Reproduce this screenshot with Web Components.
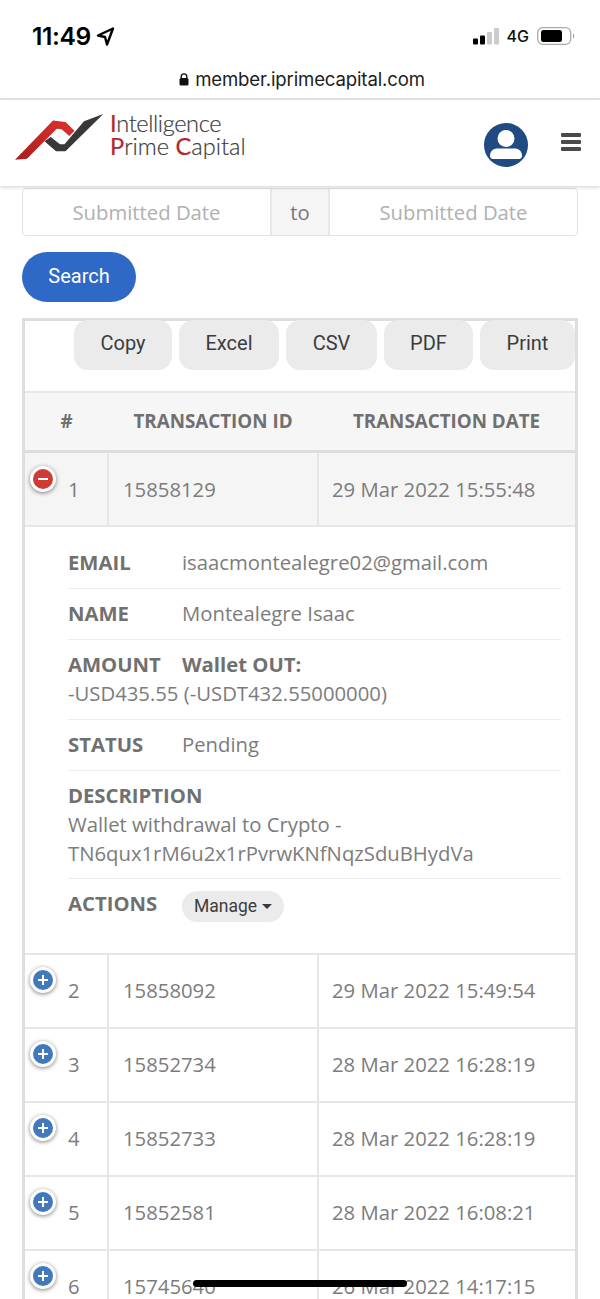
<!DOCTYPE html>
<html>
<head>
<meta charset="utf-8">
<title>Transactions</title>
<style>
  html, body { margin: 0; padding: 0; background: #fff; }
  body { width: 600px; height: 1299px; overflow: hidden; font-family: "Open Sans", sans-serif; color: #6f6f6f; }
</style>
</head>
<body>
<member-page>
  <status-bar slot="chrome" time="11:49"></status-bar>
  <url-bar slot="chrome">member.iprimecapital.com</url-bar>
  <site-header slot="chrome"></site-header>

  <date-filter></date-filter>
  <search-button>Search</search-button>

  <tx-table>
    <export-bar slot="tools"></export-bar>
    <tx-row open index="1" txid="15858129" date="29 Mar 2022 15:55:48"></tx-row>
    <tx-detail>
      <tx-field label="EMAIL">isaacmontealegre02@gmail.com</tx-field>
      <tx-field label="NAME">Montealegre Isaac</tx-field>
      <tx-field label="AMOUNT" head="Wallet OUT:" stacked>-USD435.55 (-USDT432.55000000)</tx-field>
      <tx-field label="STATUS">Pending</tx-field>
      <tx-field label="DESCRIPTION" block>Wallet withdrawal to Crypto -<br>TN6qux1rM6u2x1rPvrwKNfNqzSduBHydVa</tx-field>
      <tx-field label="ACTIONS" last><manage-button>Manage</manage-button></tx-field>
    </tx-detail>
    <tx-row index="2" txid="15858092" date="29 Mar 2022 15:49:54"></tx-row>
    <tx-row index="3" txid="15852734" date="28 Mar 2022 16:28:19"></tx-row>
    <tx-row index="4" txid="15852733" date="28 Mar 2022 16:28:19"></tx-row>
    <tx-row index="5" txid="15852581" date="28 Mar 2022 16:08:21"></tx-row>
    <tx-row index="6" txid="15745640" date="26 Mar 2022 14:17:15"></tx-row>
  </tx-table>
</member-page>

<script>
function defineElement(name, markup, setup) {
  customElements.define(name, class extends HTMLElement {
    constructor() {
      super();
      const template = document.createElement('template');
      template.innerHTML = markup;
      const shadowRoot = this.attachShadow({mode: 'open'});
      shadowRoot.appendChild(template.content.cloneNode(true));
    }
    connectedCallback() {
      if (setup) setup(this, this.shadowRoot);
    }
  });
}

defineElement('member-page', `
  <style>
    :host { display: block; position: relative; width: 600px; height: 1299px; overflow: hidden; }
    .content { padding: 2px 22px 0; }
    .home {
      position: absolute; left: 193px; top: 1280px; width: 214px; height: 7px;
      border-radius: 4px; background: #000;
    }
  </style>
  <slot name="chrome"></slot>
  <div class="content"><slot></slot></div>
  <div class="home"></div>
`);

defineElement('status-bar', `
  <style>
    :host { display: flex; align-items: center; height: 60px; padding: 12px 25px 0 32px; box-sizing: border-box; color: #000; }
    .time { font: 600 24.600px/1 Inter, sans-serif; letter-spacing: -.4px; }
    .arrow { margin-left: 5px; }
    .right { margin-left: auto; display: flex; align-items: center; }
    .net { font: 500 16px/1 Inter, sans-serif; margin: 0 8px 0 7px; color: #111; }
  </style>
  <span class="time"></span>
  <svg class="arrow" width="19" height="19" viewBox="0 0 19 19"><path d="M17 1.500 2 8.500l7 1.500 2 7.500z" fill="none" stroke="#000" stroke-width="2.400" stroke-linejoin="round"/></svg>
  <div class="right">
    <svg width="27" height="17" viewBox="0 0 27 17">
      <rect x="0" y="10.500" width="5" height="6" rx="1" fill="#000"/>
      <rect x="7" y="7.500" width="5" height="9" rx="1" fill="#000"/>
      <rect x="14" y="4" width="5" height="12.500" rx="1" fill="#ccc"/>
      <rect x="21" y="0" width="5" height="16.500" rx="1" fill="#ccc"/>
    </svg>
    <span class="net">4G</span>
    <svg width="38" height="18" viewBox="0 0 38 18">
      <rect x=".7" y=".7" width="33" height="16.600" rx="5" fill="none" stroke="#aaa" stroke-width="1.300"/>
      <rect x="4" y="3" width="21" height="12" rx="2.500" fill="#000"/>
      <path d="M36 6.500c1.500.5 1.500 4.500 0 5z" fill="#999"/>
    </svg>
  </div>
`, (el, root) => {
  root.querySelector('.time').textContent = el.getAttribute('time');
});

defineElement('url-bar', `
  <style>
    :host { display: flex; justify-content: center; align-items: center; gap: 6px; height: 40px; box-sizing: border-box; padding: 0 0 0 4px; color: #1d1d1d; font: 400 18.600px/1 Inter, sans-serif; letter-spacing: -.15px; border-bottom: 2px solid #e8e8e8; }
    svg { flex: none; }
  </style>
  <svg width="10" height="13" viewBox="0 0 10 13"><path d="M2.200 5.500V3.700a2.800 2.800 0 0 1 5.600 0v1.800" fill="none" stroke="#111" stroke-width="1.400"/><rect x=".5" y="5" width="9" height="7.500" rx="1.500" fill="#111"/></svg>
  <slot></slot>
`);

defineElement('site-header', `
  <style>
    :host { display: flex; align-items: center; height: 86px; padding: 0 19px 0 15px; position: relative; z-index: 2; background: #fff; box-shadow: 0 1px 4px rgba(0,0,0,.2); }
    .logo { display: flex; align-items: flex-start; margin-top: -12px; }
    .name { margin: -2px 0 0 6px; font: 300 23.600px/23px Lato, sans-serif; color: #3d3d3d; -webkit-text-stroke: .2px #3d3d3d; }
    .name b { font-weight: 400; color: #b5272a; -webkit-text-stroke: .2px #b5272a; }
    .first { letter-spacing: -.4px; }
    .right { margin-left: auto; display: flex; align-items: center; gap: 33px; }
    .avatar { margin-top: 4px; }
    .menu { display: flex; flex-direction: column; gap: 3px; width: 20px; margin-top: -2px; }
    .menu i { display: block; height: 4px; background: #4a4a4a; border-radius: 1px; }
  </style>
  <div class="logo">
    <svg width="89" height="46" viewBox="0 0 89 46">
      <defs><linearGradient id="red" x1="0" y1="1" x2="1" y2="0"><stop offset="0" stop-color="#a61f1f"/><stop offset="1" stop-color="#e0312c"/></linearGradient></defs>
      <path d="M0 45.700 38 6.500 50.500 8l9 8.700-5.200 5.300-7.600-6.800-5-.5L12 44.700z" fill="url(#red)"/>
      <path d="M29.500 27.300 35.700 23 45 30.300h4.500L69 7.300 88.300 0 50.500 37.200H41z" fill="#383838"/>
    </svg>
    <div class="name"><span class="first"><b>I</b>ntelligence</span><br><b>P</b>rime <b>C</b>apital</div>
  </div>
  <div class="right">
    <svg class="avatar" width="44" height="44" viewBox="0 0 44 44">
      <defs><clipPath id="disc"><circle cx="22" cy="22" r="22"/></clipPath></defs>
      <circle cx="22" cy="22" r="22" fill="#204a82"/>
      <circle cx="22" cy="15.500" r="8.500" fill="#fff"/>
      <path d="M6 33c0-5 3-7.500 8-7.500h16c5 0 8 2.500 8 7.500 0 1.500-1 3-3 3H9c-2 0-3-1.500-3-3z" fill="#fff" clip-path="url(#disc)"/>
    </svg>
    <div class="menu"><i></i><i></i><i></i></div>
  </div>
`);

defineElement('date-filter', `
  <style>
    :host { display: grid; grid-template-columns: 1fr 60px 1fr; height: 48px; box-sizing: border-box; border: 1px solid #e2e2e2; border-radius: 4px; font: 400 20.300px/46px "Open Sans", sans-serif; color: #b0b0b0; text-align: center; }
    .to { background: #f5f5f5; color: #777; border-left: 2px solid #e8e8e8; border-right: 2px solid #e8e8e8; }
  </style>
  <span>Submitted Date</span>
  <span class="to">to</span>
  <span>Submitted Date</span>
`);

defineElement('search-button', `
  <style>
    :host { display: block; width: 114px; height: 50px; margin: 16px 0; border-radius: 25px; background: #2f69c8; color: #fff; font: 400 20px/48px Roboto, sans-serif; text-align: center; }
  </style>
  <slot></slot>
`);

defineElement('tx-table', `
  <style>
    :host { display: block; border: solid #ddd; border-width: 3px 3px 0; }
    .tools { height: 71px; border-bottom: 2px solid #e8e8e8; }
    .head {
      display: grid; grid-template-columns: 83px 210px 1fr; height: 57px;
      background: #f6f6f6; border-bottom: 3px solid #ddd;
      font: 700 18.800px/56px "Open Sans", sans-serif; color: #707070; text-align: center;
    }
  </style>
  <div class="tools"><slot name="tools"></slot></div>
  <div class="head"><span>#</span><span>TRANSACTION ID</span><span>TRANSACTION DATE</span></div>
  <slot></slot>
`);

defineElement('export-bar', `
  <style>
    :host { display: flex; justify-content: flex-end; gap: 7px; margin-top: -1px; }
    span { height: 50px; border-radius: 14px; background: #ebebeb; color: #3c3c3c; font: 400 20px/46px Roboto, sans-serif; text-align: center; }
  </style>
  <span style="width:98px">Copy</span>
  <span style="width:100px">Excel</span>
  <span style="width:91px">CSV</span>
  <span style="width:89px">PDF</span>
  <span style="width:95px">Print</span>
`);

defineElement('tx-row', `
  <style>
    :host { display: grid; grid-template-columns: 83px 210px 1fr; height: 74px; box-sizing: border-box; border-bottom: 2px solid #e6e6e6; font: 400 20.300px/70px "Open Sans", sans-serif; color: #7c7c7c; position: relative; }
    :host([open]) { background: #f5f5f5; line-height: 72px; }
    span + span { border-left: 2px solid #e6e6e6; margin-left: -1px; padding-left: 14px; }
    .date { padding-left: 13px; }
    .num { padding-left: 43px; }
    .toggle {
      position: absolute; left: 5px; top: 12px; width: 26px; height: 26px; box-sizing: border-box;
      border: 3px solid #fff; border-radius: 50%; background: #4279bd;
      box-shadow: 0 1px 4px rgba(0,0,0,.5);
    }
    :host([open]) .toggle { top: 13px; background: #cf3c36; }
    .toggle::before, .toggle::after { content: ""; position: absolute; background: #fff; }
    .toggle::before { left: 5px; right: 5px; top: 9px; height: 2px; }
    .toggle::after { left: 9px; top: 5px; width: 2px; height: 10px; }
    :host([open]) .toggle::after { display: none; }
  </style>
  <div class="toggle"></div>
  <span class="num"></span><span class="id"></span><span class="date"></span>
`, (el, root) => {
  root.querySelector('.num').textContent = el.getAttribute('index');
  root.querySelector('.id').textContent = el.getAttribute('txid');
  root.querySelector('.date').textContent = el.getAttribute('date');
});

defineElement('tx-detail', `
  <style>
    :host { display: block; height: 428px; box-sizing: border-box; padding: 11px 14px 0 43px; border-bottom: 2px solid #e6e6e6; }
  </style>
  <slot></slot>
`);

defineElement('tx-field', `
  <style>
    :host { display: block; border-bottom: 1px solid #ececec; padding: 10px 0 10.900px; font: 400 20.300px/29px "Open Sans", sans-serif; color: #7c7c7c; }
    :host([last]) { border-bottom: 0; }
    b { display: inline-block; min-width: 114px; font-weight: 700; color: #707070; }
    .head { font-weight: 700; color: #707070; }
    :host([block]) b { display: block; }
  </style>
  <b></b><span class="head"></span><span class="br"></span><slot></slot>
`, (el, root) => {
  root.querySelector('b').textContent = el.getAttribute('label');
  if (el.hasAttribute('head')) root.querySelector('.head').textContent = el.getAttribute('head');
  if (el.hasAttribute('stacked')) root.querySelector('.br').style.display = 'block';
});

defineElement('manage-button', `
  <style>
    :host { display: inline-flex; align-items: center; gap: 5px; height: 31px; padding: 0 12px; border-radius: 16px; background: #ebebeb; color: #3c3c3c; font: 400 17.500px/31px Roboto, sans-serif; vertical-align: middle; }
    i { width: 0; height: 0; border: 5.500px solid transparent; border-top-color: #3c3c3c; border-bottom: 0; }
  </style>
  <slot></slot><i></i>
`);
</script>
</body>
</html>
